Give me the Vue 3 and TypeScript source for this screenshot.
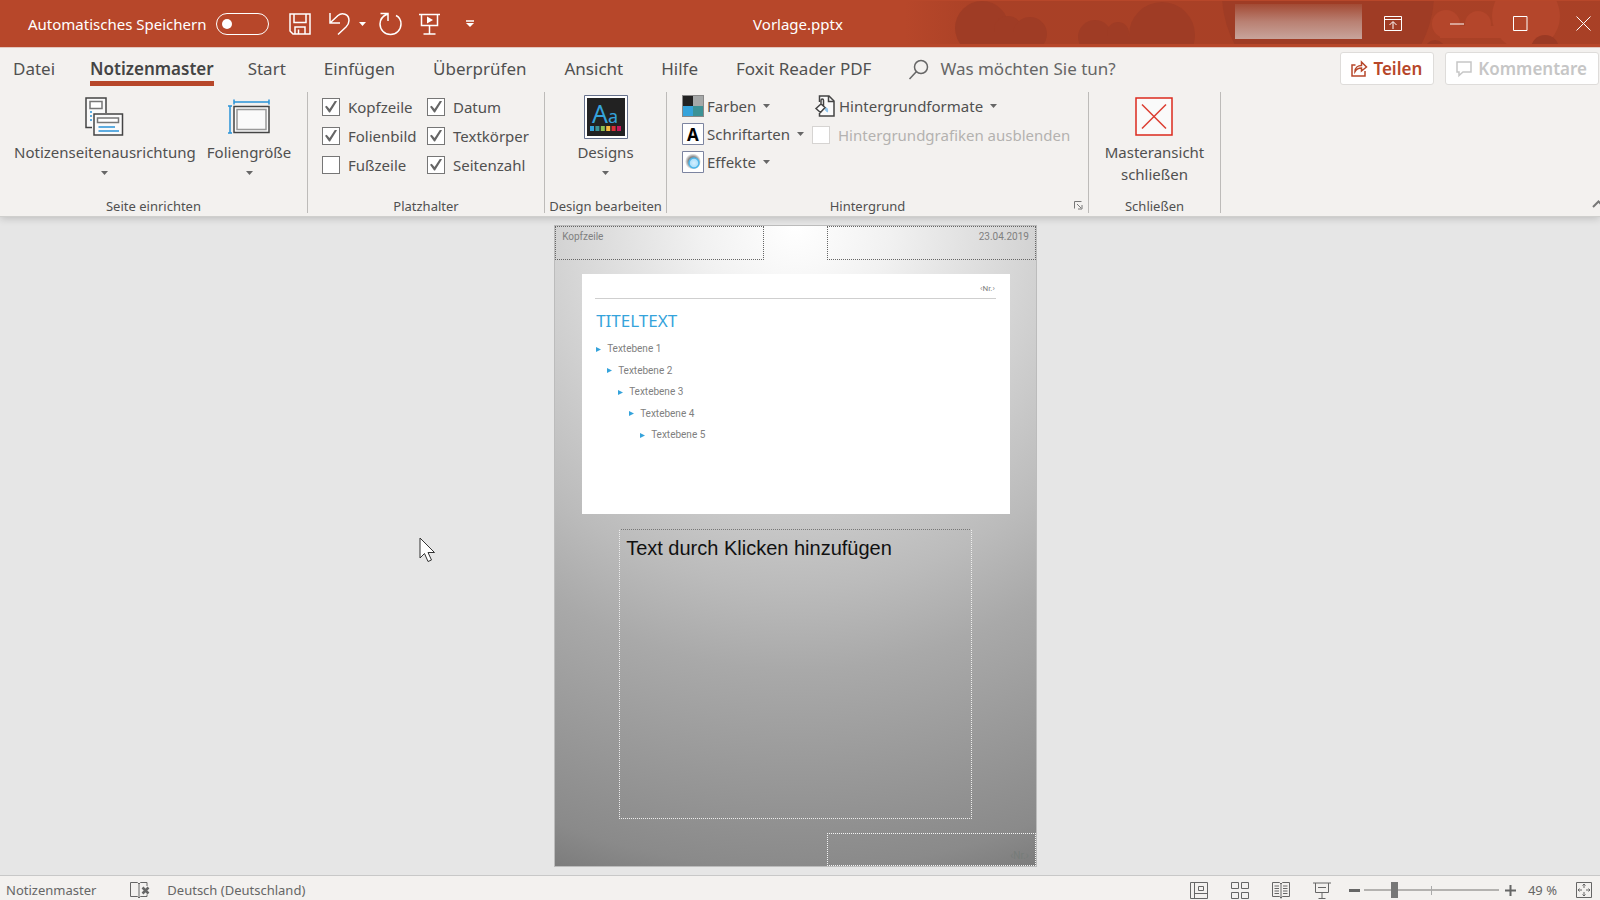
<script setup lang="ts">
import { ref } from 'vue'

interface Placeholder { id: string; label: string; on: boolean }

const autoSave = ref(false)
const hideGraphics = ref(false)
const zoom = ref(21)
const query = ref('')
const activeTab = ref('Notizenmaster')
const tabs: string[] = ['Datei', 'Notizenmaster', 'Start', 'Einfügen', 'Überprüfen', 'Ansicht', 'Hilfe', 'Foxit Reader PDF']
const placeholders = ref<Placeholder[]>([
  { id: 'kopf', label: 'Kopfzeile', on: true },
  { id: 'datum', label: 'Datum', on: true },
  { id: 'bild', label: 'Folienbild', on: true },
  { id: 'text', label: 'Textkörper', on: true },
  { id: 'fuss', label: 'Fußzeile', on: false },
  { id: 'zahl', label: 'Seitenzahl', on: true },
])
const levels: number[] = [1, 2, 3, 4, 5]
const swatches: string[] = ['#35a3db', '#3c9296', '#8cc152', '#f6bb42', '#da3036', '#c2185b']
</script>

<template>
  <div class="app">
    <header class="titlebar">
      <svg class="decor" width="700" height="47" viewBox="900 0 700 47" aria-hidden="true">
        <defs>
          <linearGradient id="fade" x1="0" x2="1"><stop offset="0" stop-color="#9b3a22" stop-opacity="0" /><stop offset=".12" stop-color="#9b3a22" stop-opacity=".5" /><stop offset="1" stop-color="#9b3a22" stop-opacity=".5" /></linearGradient>
          <clipPath id="band"><rect x="900" y="1" width="700" height="43" /></clipPath>
        </defs>
        <g clip-path="url(#band)">
          <rect x="905" y="1" width="695" height="43" fill="url(#fade)" />
          <g fill="#9f3c25">
            <circle cx="982" cy="28" r="27" /><circle cx="1008" cy="30" r="14" /><circle cx="1030" cy="34" r="17" /><rect x="962" y="32" width="82" height="12" />
            <circle cx="1095" cy="37" r="17" /><circle cx="1118" cy="33" r="11" /><circle cx="1162" cy="35" r="33" /><rect x="1084" y="36" width="50" height="8" />
            <circle cx="1328" cy="-6" r="106" />
          </g>
          <g fill="#b4462b"><circle cx="1526" cy="16" r="34" /><circle cx="1478" cy="24" r="13" /><circle cx="1446" cy="24" r="14" /><rect x="1440" y="26" width="64" height="12" /></g>
          <circle cx="1545" cy="49" r="14" fill="#9b3a24" /><circle cx="1435" cy="50" r="10" fill="#9b3a24" />
        </g>
      </svg>
      <div class="quick">
        <label class="auto" for="autosave">Automatisches Speichern</label>
        <input id="autosave" v-model="autoSave" class="switch" type="checkbox" role="switch">
        <button class="ib save" type="button" aria-label="Speichern">
          <svg width="22" height="22" viewBox="0 0 22 22"><path d="M1 1h20v20H4l-3-3zM5 1v8.500h12V1M6 21v-7h10v7M9.500 16.500V21" /></svg>
        </button>
        <button class="ib undo" type="button" aria-label="Rückgängig">
          <svg width="22" height="23" viewBox="0 0 22 23"><path d="M1 1v10h10M1.500 10.500 9 3.500C13 0 20 2 20 8.500c0 3-1.500 5-3 6.500l-8 7.500" /></svg>
          <svg class="tri" width="7" height="4" viewBox="0 0 7 4"><path d="M0 0h7L3.500 4z" /></svg>
        </button>
        <button class="ib redo" type="button" aria-label="Wiederholen">
          <svg width="23" height="23" viewBox="0 0 23 23"><path d="M1.500 1.500h7.500v7.500M8.500 2C3.500 4 1 7.500 1 12a10.500 10.500 0 0 0 21 0c0-4-2-7-5-8.500" /></svg>
        </button>
        <button class="ib show" type="button" aria-label="Präsentation starten">
          <svg width="21" height="22" viewBox="0 0 21 22"><path d="M0 1.500h21M2.500 1.500v11h16v-11M10.500 12.500v8M4.500 21h12" /><path class="solid" d="M8 3.500v7l6-3.500z" /></svg>
        </button>
        <button class="ib more" type="button" aria-label="Symbolleiste anpassen">
          <svg width="8" height="7" viewBox="0 0 8 7"><path d="M0 1h8" /><path class="solid" d="M0 3h8L4 7z" /></svg>
        </button>
      </div>
      <h1>Vorlage.pptx</h1>
      <div class="win">
        <div class="user"></div>
        <button class="ib" type="button" aria-label="Menüband-Anzeigeoptionen"><svg width="18" height="15" viewBox="0 0 18 15"><path d="M.5.5h17v14H.5zM.5 3.500h17M9 13V6M5.500 9 9 5.500 12.500 9" /></svg></button>
        <button class="ib" type="button" aria-label="Minimieren"><svg width="15" height="15" viewBox="0 0 15 15"><path d="M0 8h14" /></svg></button>
        <button class="ib" type="button" aria-label="Maximieren"><svg width="15" height="15" viewBox="0 0 15 15"><path d="M.5.5h13.500v14H.5z" /></svg></button>
        <button class="ib" type="button" aria-label="Schließen"><svg width="15" height="15" viewBox="0 0 15 15"><path d="m.5.5 14 14m0-14-14 14" /></svg></button>
      </div>
    </header>

    <nav class="tabs">
      <button v-for="t in tabs" :key="t" type="button" class="tab" :class="{ active: t === activeTab }" @click="activeTab = t">{{ t }}</button>
      <div class="search">
        <svg width="20" height="21" viewBox="0 0 20 21"><circle cx="12" cy="8" r="6.500" /><path d="M7.500 12.500.5 20" /></svg>
        <input v-model="query" type="text" aria-label="Suche" placeholder="Was möchten Sie tun?">
      </div>
      <button class="box share" type="button">
        <svg width="16" height="17" viewBox="0 0 16 17"><path d="M4.500 5H1v11h13v-5M4 11.500C4 7.500 7 5.500 10.500 5.500V2l5 5-5 4V8C7.500 8 5.500 9 4 11.500z" /></svg>Teilen
      </button>
      <button class="box comments" type="button" disabled>
        <svg width="16" height="16" viewBox="0 0 16 16"><path d="M1 1h14v10H7l-4 3.500V11H1z" /></svg>Kommentare
      </button>
    </nav>

    <section class="ribbon">
      <div class="group setup">
        <div class="tools">
          <button class="big" type="button">
            <span class="pic"><svg width="40" height="40" viewBox="0 0 40 40"><path class="dark" d="M7 30.500H1V1h20v15" fill="#fafafa" /><path d="M5 4.500h12v7H5z" fill="#fff" stroke="#777" stroke-width="1.500" /><path class="blue" d="M5 15h2M5 19h2M5 23h2" /><path class="dark" d="M9 17h28.500v21H9z" fill="#fafafa" /><path d="M12.500 21h21v4.500h-21z" fill="#fff" stroke="#777" stroke-width="1.500" /><path class="blue" d="M13.500 30H30M13.500 34H34" /></svg></span>
            <span>Notizenseitenausrichtung</span>
            <svg class="caret" width="7" height="4" viewBox="0 0 7 4"><path d="M0 0h7L3.500 4z" /></svg>
          </button>
          <button class="big" type="button">
            <span class="pic"><svg width="42" height="36" viewBox="0 0 42 36"><path class="blue" d="M6 3h35M6 .5v5M41 .5v5M2 7v27M0 7h4M0 34h4" /><path class="dark" d="M6 7.500h35v26H6z" fill="#fafafa" /><path d="M9 10.500h29v20H9z" fill="none" stroke="#999" stroke-width="1.500" /></svg></span>
            <span>Foliengröße</span>
            <svg class="caret" width="7" height="4" viewBox="0 0 7 4"><path d="M0 0h7L3.500 4z" /></svg>
          </button>
        </div>
        <h2>Seite einrichten</h2>
      </div>

      <div class="group holders">
        <div class="tools checks">
          <label v-for="p in placeholders" :key="p.id" class="check" :for="p.id"><input :id="p.id" v-model="p.on" type="checkbox">{{ p.label }}</label>
        </div>
        <h2>Platzhalter</h2>
      </div>

      <div class="group design">
        <div class="tools">
          <button class="big" type="button">
            <span class="pic"><svg width="44" height="44" viewBox="0 0 44 44"><path d="M.5.500h43v43H.5z" fill="#fff" stroke="#66718c" /><path d="M3 3h38v38H3z" fill="#222" /><text x="8" y="28" class="aa">A<tspan class="small-a">a</tspan></text><rect v-for="(c, i) in swatches" :key="c" :x="6 + i * 5.400" y="31" width="4" height="5" :fill="c" /></svg></span>
            <span>Designs</span>
            <svg class="caret" width="7" height="4" viewBox="0 0 7 4"><path d="M0 0h7L3.500 4z" /></svg>
          </button>
        </div>
        <h2>Design bearbeiten</h2>
      </div>

      <div class="group background">
        <div class="tools">
          <div class="stack">
            <button class="row" type="button">
              <svg width="22" height="22" viewBox="0 0 22 22"><path d="M0 0h22v22H0z" fill="#888" /><path d="M1 1h10v10H1z" fill="#222" /><path d="M11 1h10v10H11z" fill="#a5a8a8" /><path d="M1 11h10v10H1z" fill="#35a3db" /><path d="M11 11h10v10H11z" fill="#3c9296" /></svg>
              Farben<svg class="caret" width="7" height="4" viewBox="0 0 7 4"><path d="M0 0h7L3.500 4z" /></svg>
            </button>
            <button class="row" type="button">
              <svg width="22" height="22" viewBox="0 0 22 22"><path d="M.5.500h21v21H.5z" fill="#fff" stroke="#7c84a0" /><text x="11" y="17.500" class="font-a">A</text></svg>
              Schriftarten<svg class="caret" width="7" height="4" viewBox="0 0 7 4"><path d="M0 0h7L3.500 4z" /></svg>
            </button>
            <button class="row" type="button">
              <svg width="22" height="22" viewBox="0 0 22 22"><defs><radialGradient id="orb"><stop offset="0" stop-color="#d4efff" /><stop offset="1" stop-color="#a4dcfa" /></radialGradient><radialGradient id="halo"><stop offset=".6" stop-color="#888" /><stop offset="1" stop-color="#fff" /></radialGradient></defs><path d="M.5.500h21v21H.5z" fill="#fff" stroke="#7c84a0" /><circle cx="11" cy="10.500" r="8" fill="url(#halo)" /><circle cx="12" cy="12" r="5" fill="url(#orb)" stroke="#4ab5ea" stroke-width="1.500" /></svg>
              Effekte<svg class="caret" width="7" height="4" viewBox="0 0 7 4"><path d="M0 0h7L3.500 4z" /></svg>
            </button>
          </div>
          <div class="stack second">
            <button class="row" type="button">
              <svg width="22" height="22" viewBox="0 0 22 22"><path class="dark" d="M5.500 7V1H15l5 5v15H5.500v-3" fill="#fafafa" /><path class="dark" d="M14.500 1v5.500H20" fill="none" /><path d="M11 13c2-1 3 1 2.500 4-1-1-2.500-1-2.500-4z" fill="#8ec5ee" stroke="#8ec5ee" /><path d="m2 13.500 5-4.500 4 3.500-4.500 5zM7 9V5.500c0-2 2.500-2 2.500 0V11" fill="#fff" stroke="#444" stroke-width="1.500" /></svg>
              Hintergrundformate<svg class="caret" width="7" height="4" viewBox="0 0 7 4"><path d="M0 0h7L3.500 4z" /></svg>
            </button>
            <label class="check off" for="hide"><input id="hide" v-model="hideGraphics" type="checkbox" disabled>Hintergrundgrafiken ausblenden</label>
          </div>
        </div>
        <div class="foot">
          <h2>Hintergrund</h2>
          <button class="launch" type="button" aria-label="Hintergrund formatieren"><svg width="9" height="9" viewBox="0 0 9 9"><path d="M.5 7.500v-7h7M3 3l4 4M8 4v4H4" /></svg></button>
        </div>
      </div>

      <div class="group close">
        <div class="tools">
          <button class="big" type="button">
            <span class="pic"><svg width="38" height="39" viewBox="0 0 38 39"><path d="M1 1h36v37H1z" fill="#fafafa" stroke="#dc2a1e" stroke-width="1.500" /><path d="m7 7.500 24 24m0-24-24 24" stroke="#dc3c30" stroke-width="1.500" /></svg></span>
            <span>Masteransicht<br>schließen</span>
          </button>
        </div>
        <h2>Schließen</h2>
      </div>
      <button class="collapse" type="button" aria-label="Menüband reduzieren"><svg width="13" height="8" viewBox="0 0 13 8"><path d="m1 7 5.500-5.500L12 7" /></svg></button>
    </section>

    <main class="work">
      <article class="page">
        <div class="line">
          <div class="ph">Kopfzeile</div>
          <div class="ph end">23.04.2019</div>
        </div>
        <section class="slide">
          <p class="nr">‹Nr.›</p>
          <h3>TITELTEXT</h3>
          <ul>
            <li v-for="n in levels" :key="n" :style="{ paddingLeft: (n - 1) * 11 + 'px' }"><svg width="5" height="5" viewBox="0 0 5 5"><path d="M0 0v5l5-2.500z" /></svg>Textebene {{ n }}</li>
          </ul>
        </section>
        <div class="body">Text durch Klicken hinzufügen</div>
        <div class="ph number">‹Nr.›</div>
      </article>
      <svg class="cursor" width="17" height="26" viewBox="0 0 17 26" aria-hidden="true"><path d="M1 1v20l4.500-4.500 3.500 8 3.500-1.500-3.500-7.500H15.500z" /></svg>
    </main>

    <footer class="status">
      <span>Notizenmaster</span>
      <button class="ib spell" type="button" aria-label="Rechtschreibung"><svg width="20" height="17" viewBox="0 0 20 17"><path d="M9 16V2L7.500.5H.5v14h7L9 16l1.500-1.500h6.500v-2M9 2l1.500-1.500H17V4" /><path d="m12.500 5.500 6 6m0-6-6 6" stroke-width="2.500" /></svg></button>
      <span>Deutsch (Deutschland)</span>
      <div class="views">
        <button class="ib" type="button" aria-label="Normal"><svg width="18" height="17" viewBox="0 0 18 17"><path d="M.5.500h17v16H.5zM4.500.500v16M4.500 11.500h13M8.500 4.500h5v4h-5z" /></svg></button>
        <button class="ib" type="button" aria-label="Foliensortierung"><svg width="18" height="17" viewBox="0 0 18 17"><path d="M.5.500h7v6h-7zM10.500.500h7v6h-7zM.5 10.500h7v6h-7zM10.500 10.500h7v6h-7z" /></svg></button>
        <button class="ib" type="button" aria-label="Leseansicht"><svg width="18" height="17" viewBox="0 0 18 17"><path d="M9 16.500V2L7.500.5h-7v14h7L9 16l1.500-1.500h7V.500h-7L9 2M2.500 4H7M2.500 6.500H7M2.500 9H7M2.500 11.500H7M11 4h4.500M11 6.500h4.500M11 9h4.500M11 11.500h4.500" /></svg></button>
        <button class="ib" type="button" aria-label="Bildschirmpräsentation"><svg width="18" height="17" viewBox="0 0 18 17"><path d="M0 1h18M2.500 1v9.500h13V1M9 10.500v6M5.500 16.500h7M5 5.500h8" /></svg></button>
      </div>
      <button class="ib" type="button" aria-label="Verkleinern"><svg width="11" height="11" viewBox="0 0 11 11"><path d="M0 5.500h11" stroke-width="3" /></svg></button>
      <input v-model.number="zoom" class="zoom" type="range" min="0" max="100" aria-label="Zoom">
      <button class="ib" type="button" aria-label="Vergrößern"><svg width="11" height="11" viewBox="0 0 11 11"><path d="M0 5.500h11M5.500 0v11" stroke-width="2" /></svg></button>
      <span class="percent">49 %</span>
      <button class="ib fit" type="button" aria-label="An Fenster anpassen"><svg width="16" height="16" viewBox="0 0 16 16"><path d="M.5.500h15v15H.5zM8 2v4M6.500 3.500 8 2l1.500 1.500M8 14v-4M6.500 12.500 8 14l1.500-1.500M2 8h4M3.500 6.500 2 8l1.500 1.500M14 8h-4M12.500 6.500 14 8l-1.500 1.500" /></svg></button>
    </footer>
  </div>
</template>

<style>
html, body { overflow: hidden; }
</style>

<style scoped>
.app { display: flex; flex-direction: column; height: 100vh; overflow: hidden; background: #e6e6e6; color: #505050; font: 15px/22px "Noto Sans", "Open Sans", sans-serif; }
*, *::before, *::after { box-sizing: border-box; }
button, input { font: inherit; color: inherit; margin: 0; padding: 0; }
button { border: 0; background: none; white-space: nowrap; }
h1, h2, h3, p, ul { margin: 0; padding: 0; font-weight: 400; }
svg { display: block; flex: none; overflow: visible; }
.ib { display: flex; align-items: center; }
.ib svg { fill: none; stroke: currentColor; }

.titlebar { position: relative; flex: none; display: grid; grid-template-columns: 1fr auto 1fr; align-items: center; height: 47px; background: #b7472a; color: #fff; }
.decor { position: absolute; top: 0; right: 0; }
.quick { display: flex; align-items: center; padding-left: 28px; }
.quick .ib svg { stroke-width: 1.500; }
.switch { appearance: none; display: flex; align-items: center; width: 53px; height: 22px; margin-left: 10px; padding-left: 5px; border: 1px solid #fff; border-radius: 11px; }
.switch::before { content: ""; width: 10px; height: 10px; border-radius: 50%; background: #fff; }
.save { margin-left: 20px; }
.undo { margin-left: 18px; gap: 8px; }
.quick .tri { fill: #fff; stroke: none; }
.redo { margin-left: 13px; }
.show { margin-left: 17px; }
.more { margin-left: 26px; }
.ib .solid { fill: currentColor; stroke: none; }
h1 { position: relative; font-size: 15px; line-height: 22px; padding-right: 4px; }
.win { position: relative; display: flex; align-items: center; justify-content: flex-end; gap: 48px; padding-right: 9px; }
.user { width: 127px; height: 35px; margin: 0 -26px 4px 0; background: linear-gradient(#a34a34, #b98072 50%, #c8a49b); }

.tabs { flex: none; display: flex; align-items: center; height: 41px; padding: 0 1px 0 13px; gap: 38px; background: #f3f1ef; border-top: 1px solid #e3c7bf; font-size: 17px; line-height: 24px; }
.tab { height: 40px; padding-top: 2px; }
.tab.active { align-self: flex-start; height: 34px; margin: 4px -4px 0 -3px; padding: 0; font-weight: 600; color: #444; line-height: 28px; box-shadow: inset 0 -5px #b7472a; }
.search { flex: 1; display: flex; align-items: center; gap: 11px; min-width: 0; padding-top: 2px; }
.search svg { fill: none; stroke: #666; stroke-width: 1.500; }
.search input { flex: 1; min-width: 0; border: 0; outline: 0; background: transparent; }
.search input::placeholder { color: #666; opacity: 1; }
.box { display: flex; align-items: center; gap: 6px; height: 33px; margin-top: 1px; padding: 0 11px 0 10px; border: 1px solid #dedcda; border-radius: 3px; background: #fff; font-weight: 600; }
.box svg { fill: none; stroke: currentColor; stroke-width: 1.500; }
.share { color: #b7472a; }
.comments { margin-left: -27px; color: #c6c6c6; }

.ribbon { position: relative; z-index: 1; flex: none; display: flex; height: 129px; padding-top: 4px; background: #f3f1ef; border-bottom: 1px solid #cfcfcd; box-shadow: 0 1px 8px rgba(0, 0, 0, .2); clip-path: inset(0 0 -12px 0); }
.group { flex: none; display: flex; flex-direction: column; height: 121px; border-right: 1px solid #bdbbb9; }
.tools { flex: 1; display: flex; }
.group h2 { font-size: 13px; line-height: 18px; text-align: center; margin-bottom: -2px; }
.setup { width: 308px; }
.setup .tools { padding-left: 14px; gap: 11px; }
.holders { width: 237px; }
.design { width: 122px; }
.background { width: 422px; }
.close { width: 132px; }
.design .tools, .close .tools { justify-content: center; }
.big { display: flex; flex-direction: column; align-items: center; }
.pic { display: flex; align-items: center; height: 49px; }
.caret { fill: #666; }
.big .caret { margin-top: 8px; }
.checks { display: grid; grid-template-columns: 105px 1fr; grid-auto-rows: 29px; align-content: start; padding-left: 14px; }
.check { display: flex; align-items: center; gap: 8px; white-space: nowrap; }
.check input { appearance: none; flex: none; display: grid; place-items: center; width: 18px; height: 18px; border: 1px solid #767676; background: #fff; }
.check input:checked::after { content: ""; width: 12px; height: 12px; background: #666; clip-path: polygon(0 52%, 14% 44%, 38% 70%, 84% 0, 100% 6%, 42% 100%, 34% 100%); }
.check.off { height: 30px; margin-left: -2px; color: #b4b2b0; }
.check.off input { border-color: #d6d4d2; }
.background .tools { padding-left: 15px; }
.stack { width: 132px; }
.stack.second { width: auto; }
.row { display: flex; align-items: center; gap: 3px; height: 28px; }
.row .caret { margin-left: 4px; }
.foot { display: flex; align-items: center; }
.foot h2 { flex: 1; }
.launch { width: 20px; padding-left: 6px; }
.launch svg { fill: none; stroke: #777; }
.dark { stroke: #444; stroke-width: 1.500; }
.blue { fill: none; stroke: #2a93d8; stroke-width: 1.500; }
.aa { fill: #35a3db; font: 25px "Noto Sans", sans-serif; }
.small-a { font-size: 18px; }
.font-a { fill: #000; font: 700 17px "Noto Sans", sans-serif; text-anchor: middle; }
.collapse { align-self: flex-end; margin: 0 -5px 8px auto; }
.collapse svg { fill: none; stroke: #777; stroke-width: 2; }

.work { position: relative; flex: 1; min-height: 0; display: flex; justify-content: center; padding: 8px 9px 8px 0; background: #e6e6e6; }
.page { display: flex; flex-direction: column; aspect-ratio: 482 / 641; border: 1px solid #bcbcbc; background: radial-gradient(circle farthest-corner at 50% 0, #fff 0, #f1f1f1 14%, #d3d3d3 35%, #c8c8c8 43%, #bbb 53%, #a9a9a9 65%, #999 80%, #8a8a8a 94%, #7c7c7c 100%); font: 10px/14px Roboto, "Noto Sans", sans-serif; color: #808080; }
.line { display: flex; justify-content: space-between; }
.ph { width: 209px; height: 34px; padding: 3px 6px 2px; border: 1px dotted #666; }
.end { text-align: right; }
.slide { margin: 14px 26px 0 27px; padding: 0 14px 0 13px; aspect-ratio: 427 / 240; background: #fff; }
.nr { height: 25px; padding: 8px 1px 0; border-bottom: 1px solid #cfcfcf; font-size: 8px; line-height: 14px; text-align: right; }
.slide h3 { padding: 10px 0 0 1px; color: #35a3db; font: 17px/24px "Noto Sans", sans-serif; }
.slide ul { display: flex; flex-direction: column; justify-content: space-between; height: 100px; margin: 9px 0 0 1px; list-style: none; }
.slide li { display: flex; align-items: center; gap: 6px; }
.slide li svg { fill: #35a3db; }
.body { flex: 1; margin: 15px 64px 14px 64px; padding: 5px 6px; border: 1px dotted #eee; border-top-color: #777; color: #111; font: 20px/26px "Liberation Sans", Arial, sans-serif; }
.number { align-self: flex-end; flex: none; height: 33px; padding-top: 15px; border-color: #f4f4f4; color: #767c79; text-align: right; }
.cursor { position: absolute; left: 419px; top: 320px; fill: #fff; stroke: #333; }

.status { flex: none; display: flex; align-items: flex-start; height: 25px; padding: 4px 8px 0 6px; background: #f3f1ef; border-top: 1px solid #c8c8c8; color: #666; font-size: 13px; line-height: 20px; }
.status .ib { height: 20px; }
.spell { margin: 0 17px 0 34px; }
.views { display: flex; gap: 23px; margin: 0 18px 0 auto; }
.zoom { appearance: none; width: 135px; height: 20px; margin: 0 6px 0 4px; background: linear-gradient(#aaa, #aaa) 50% 50% / 1px 9px no-repeat, linear-gradient(#b4b2b0, #b4b2b0) 50% 50% / 100% 2px no-repeat; }
.zoom::-webkit-slider-thumb { appearance: none; width: 7px; height: 16px; background: #777; }
.percent { margin: 0 19px 0 12px; }
</style>
